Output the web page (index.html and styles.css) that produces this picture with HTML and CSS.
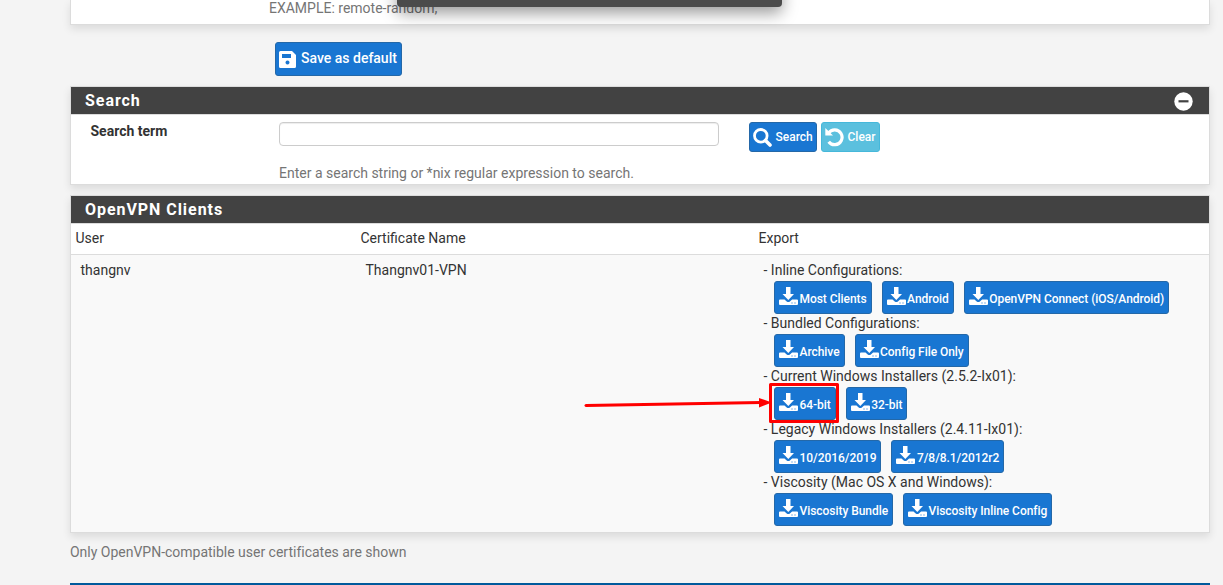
FILE: index.html
```html
<!DOCTYPE html>
<html lang="en">
<head>
<meta charset="utf-8">
<title>OpenVPN Client Export</title>
<link rel="stylesheet" href="styles.css">
</head>
<body>
<svg class="symbols" aria-hidden="true">
  <symbol id="download" viewBox="0 0 19 19">
    <path fill="currentColor" d="M7 0h4.500v7H15L9.300 13 3.500 7H7z"/>
    <path fill="currentColor" d="M1 12.500h4.500l2.200 2q1.600 1.200 3.200 0l2.200-2H18q1 0 1 1V17q0 1-1 1H1q-1 0-1-1v-3.500q0-1 1-1z"/>
    <path fill="#1976d2" d="M12.500 15.500h1v1h-1zM15.500 15.500h1v1h-1z"/>
  </symbol>
</svg>
<div class="menu"></div>
<main class="page">
  <section class="panel panel-top"><p class="help">EXAMPLE: remote-random;</p></section>
  <button class="btn save"><svg viewBox="0 0 17 17"><path fill="currentColor" fill-rule="evenodd" d="M1.500 0H13l4 4v11.500q0 1.500-1.500 1.500h-14Q0 17 0 15.500v-14Q0 0 1.500 0zM3 3v4h9V3zM8.500 9.500a2 2 0 1 0 .01 0z"/></svg><span>Save as default</span></button>

  <section class="panel search">
    <h2 class="heading"><span>Search</span><svg class="toggle" viewBox="0 0 19 19"><circle cx="9.500" cy="9.500" r="9.200" fill="#fff"/><path fill="#424242" d="M4.500 8.200h10v2.200h-10z"/></svg></h2>
    <div class="search-row">
      <label class="term" for="q">Search term</label>
      <div class="field"><input id="q" class="input" type="text"><p class="help">Enter a search string or *nix regular expression to search.</p></div>
      <div class="actions">
        <button class="btn small find"><svg viewBox="0 0 19 19"><g fill="none" stroke="currentColor"><circle cx="7.800" cy="7.800" r="6.300" stroke-width="2.800"/><path d="M12.500 12.500l4.500 4.500" stroke-width="3.600" stroke-linecap="round"/></g></svg><span>Search</span></button>
        <button class="btn small clear"><svg viewBox="0 0 19 19"><path fill="none" stroke="currentColor" stroke-width="3.200" d="M3 5.600Q6 1.800 9.800 1.900A7.400 7.400 0 1 1 3.700 13.700"/><path fill="currentColor" d="M.3 0v7.400h7.700z"/></svg><span>Clear</span></button>
      </div>
    </div>
  </section>

  <section class="panel clients">
    <h2 class="heading"><span>OpenVPN Clients</span></h2>
    <div class="grid head"><span>User</span><span>Certificate Name</span><span>Export</span></div>
    <div class="grid row">
      <span>thangnv</span><span>Thangnv01-VPN</span>
      <div class="exports">
        <p>- Inline Configurations:</p>
        <div class="links"><a class="btn export"><svg><use href="#download"/></svg><span>Most Clients</span></a><a class="btn export"><svg><use href="#download"/></svg><span>Android</span></a><a class="btn export"><svg><use href="#download"/></svg><span>OpenVPN Connect (iOS/Android)</span></a></div>
        <p>- Bundled Configurations:</p>
        <div class="links"><a class="btn export"><svg><use href="#download"/></svg><span>Archive</span></a><a class="btn export"><svg><use href="#download"/></svg><span>Config File Only</span></a></div>
        <p>- Current Windows Installers (2.5.2-Ix01):</p>
        <div class="links"><a class="btn export"><svg><use href="#download"/></svg><span>64-bit</span></a><a class="btn export"><svg><use href="#download"/></svg><span>32-bit</span></a></div>
        <p>- Legacy Windows Installers (2.4.11-Ix01):</p>
        <div class="links"><a class="btn export"><svg><use href="#download"/></svg><span>10/2016/2019</span></a><a class="btn export"><svg><use href="#download"/></svg><span>7/8/8.1/2012r2</span></a></div>
        <p>- Viscosity (Mac OS X and Windows):</p>
        <div class="links"><a class="btn export"><svg><use href="#download"/></svg><span>Viscosity Bundle</span></a><a class="btn export"><svg><use href="#download"/></svg><span>Viscosity Inline Config</span></a></div>
      </div>
    </div>
  </section>
  <p class="help note">Only OpenVPN-compatible user certificates are shown</p>
  <div class="rule"></div>
</main>
<svg class="callout" viewBox="0 0 260 44"><path d="M3 25.500L178 22.500" stroke="#f00" stroke-width="3" stroke-linecap="round"/><path fill="#f00" d="M176 18l13 4.500-13 5z"/><rect x="187.500" y="4.500" width="67" height="37" fill="none" stroke="#f00" stroke-width="3" stroke-linejoin="round"/></svg>
</body>
</html>
```
FILE: styles.css
```css
* { box-sizing: border-box; }
body { margin: 0; height: 585px; overflow: hidden; background: #f4f4f4; color: #333; font: 14px/20px Roboto, sans-serif; }
p, h2 { margin: 0; }
.symbols { position: absolute; width: 0; height: 0; }
.menu { position: absolute; z-index: 2; left: 397px; top: -20px; width: 385px; height: 27px; border-radius: 4px; background: #4b4b4b; box-shadow: 0 6px 16px rgba(0,0,0,.4); }
.page { width: 1140px; margin-left: 70px; }
.panel { background: #fff; border: 1px solid #dcdcdc; box-shadow: 0 4px 8px rgba(0,0,0,.1); }
.panel-top { display: flow-root; height: 25px; border-top: 0; padding-left: 198px; }
.panel-top .help { margin-top: -2px; }
.help { color: #757575; }
.btn { display: inline-flex; align-items: center; border: 1px solid #2468a8; border-radius: 3px; background: #1976d2; color: #fff; font: 500 12px/18px Roboto, sans-serif; white-space: nowrap; }
.btn svg { width: 19px; height: 19px; flex: none; }
.save { width: 127px; height: 34px; margin: 17px 0 10px 205px; padding: 0 3px; gap: 5px; font-size: 14px; }
.save svg { width: 17px; height: 17px; }
.save span { margin-top: -2px; }
.heading { display: flex; justify-content: space-between; height: 28px; padding: 0 16px 0 14px; border-bottom: 1px solid #dcdcdc; background: #424242; color: #fff; font-size: 16px; font-weight: 700; line-height: 27px; letter-spacing: .95px; }
.toggle { width: 19px; height: 19px; margin-top: 5px; }
.search { height: 99px; }
.search-row { display: flex; padding-top: 7px; }
.term { width: 208px; margin-top: -1px; padding-left: 19.5px; font-weight: 700; }
.field { width: 470px; }
.input { display: block; width: 440px; height: 24px; margin-bottom: 17px; border: 1px solid #ccc; border-radius: 4px; box-shadow: inset 0 1px 1px rgba(0,0,0,.075); }
.actions { display: flex; gap: 4px; }
.small { height: 30px; padding: 0 4px 0 3px; gap: 3px; }
.small span { padding-left: .5px; }
.find { width: 68px; }
.clear { width: 59px; background: #5bc0de; border-color: #46b8da; }
.clients { height: 338px; margin-top: 10px; }
.grid { display: grid; grid-template-columns: 285px 398px 1fr; }
.head { height: 31px; padding: 4px 0 0 4.5px; border-bottom: 1px solid #dcdcdc; }
.row { height: 277px; padding: 5px 0 0 9.5px; background: #f9f9f9; }
.links { display: flex; gap: 10px; height: 33px; margin: 1px 0 -1px; padding-left: 10.5px; }
.export { padding: 0 4px; gap: 1.5px; letter-spacing: -.05px; }
.export svg { margin-top: -2px; }
.export span { margin-top: 2px; }
.note { margin-top: 9px; letter-spacing: -.01px; }
.rule { height: 3px; margin-top: 21px; background: #005a9c; }
.callout { position: absolute; z-index: 1; left: 583px; top: 380px; width: 260px; height: 44px; }
```
